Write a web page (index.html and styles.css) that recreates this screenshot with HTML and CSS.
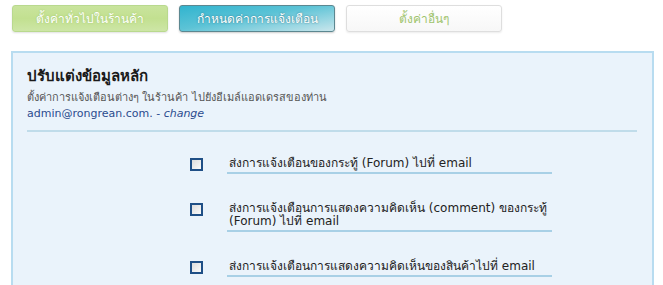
FILE: index.html
```html
<!DOCTYPE html>
<html lang="th">
<head>
<meta charset="utf-8">
<link rel="stylesheet" href="styles.css">
</head>
<body>
<div class="tabs">
  <a class="tab tab-green">ตั้งค่าทั่วไปในร้านค้า</a>
  <a class="tab tab-blue">กำหนดค่าการแจ้งเตือน</a>
  <a class="tab tab-white">ตั้งค่าอื่นๆ</a>
</div>
<div class="panel">
  <h2 class="title">ปรับแต่งข้อมูลหลัก</h2>
  <p class="desc">ตั้งค่าการแจ้งเตือนต่างๆ ในร้านค้า ไปยังอีเมล์แอดเดรสของท่าน</p>
  <p class="mail">admin@rongrean.com. - <em>change</em></p>
  <hr class="sep">
  <ul class="opts">
    <li class="opt"><span class="box"></span><span class="label">ส่งการแจ้งเตือนของกระทู้ (Forum) ไปที่ email</span></li>
    <li class="opt"><span class="box"></span><span class="label">ส่งการแจ้งเตือนการแสดงความคิดเห็น (comment) ของกระทู้ (Forum) ไปที่ email</span></li>
    <li class="opt"><span class="box"></span><span class="label">ส่งการแจ้งเตือนการแสดงความคิดเห็นของสินค้าไปที่ email</span></li>
  </ul>
</div>
</body>
</html>
```
FILE: styles.css
```css
html, body { margin: 0; padding: 0; background: #fff; }
body {
  padding: 5px 9px 0 11px;
  font-family: Tahoma, "DejaVu Sans", "Noto Sans", sans-serif;
  overflow: hidden;
}
.tabs { display: flex; gap: 11px; padding-left: 1px; height: 28px; }
.tab {
  box-sizing: border-box;
  width: 156px; height: 27px;
  border-radius: 3px;
  display: flex; align-items: center; justify-content: center;
  font-size: 12px;
  cursor: pointer;
}
.tab-green {
  background: linear-gradient(180deg, #c9e49d 0%, #c2e090 50%, #cde6a6 100%);
  border: 1px solid #b9d98e;
  color: #fff;
  text-shadow: 0 0 2px #9cc366;
  box-shadow: 0 1px 2px rgba(0,0,0,0.12);
}
.tab-blue {
  background: linear-gradient(170deg, #31b4cf 0%, #5cc3d6 45%, #c9e6ec 100%);
  border: 1px solid #5c8790;
  color: #fff;
  text-shadow: 0 0 2px #2a6f80;
  box-shadow: 0 1px 2px rgba(0,0,0,0.2);
}
.tab-white {
  background: linear-gradient(180deg, #ffffff 0%, #f7f7f7 100%);
  border: 1px solid #dedede;
  color: #9fc46d;
  box-shadow: 0 1px 2px rgba(0,0,0,0.08);
}
.panel {
  margin-top: 18px;
  background: #eaf3fb;
  border: 2px solid #b8dcf0;
  border-bottom: none;
  padding: 12px 15px 0 14px;
  height: 240px;
  box-sizing: border-box;
}
.title {
  margin: 0;
  font-size: 15px;
  font-weight: bold;
  color: #1a1a1a;
  line-height: 22px;
}
.desc {
  margin: 3px 0 0;
  font-size: 11px;
  color: #555;
  line-height: 15px;
}
.mail {
  margin: 1px 0 0;
  font-size: 11px;
  color: #2b4b8e;
  line-height: 16px;
}
.mail em { font-style: italic; }
.sep {
  margin: 8px 0 0;
  border: 0;
  border-top: 2px solid #c0dcea;
  height: 0;
}
.opts { list-style: none; margin: 0; padding: 0 0 0 163px; }
.opt { display: flex; align-items: flex-start; margin-top: 25px; }
.opt + .opt { margin-top: 28px; }
.box {
  box-sizing: border-box;
  width: 13px; height: 13px;
  border: 2px solid #1f4f86;
  background: linear-gradient(135deg, #dcdcdc, #fbfbfb);
  margin-top: 1px;
  flex: none;
}
.label {
  margin-left: 24px;
  width: 323px;
  font-size: 12px;
  color: #222;
  line-height: 13px;
  padding: 0 0 2px 2px;
  border-bottom: 2px solid #a8d0e6;
}
```
